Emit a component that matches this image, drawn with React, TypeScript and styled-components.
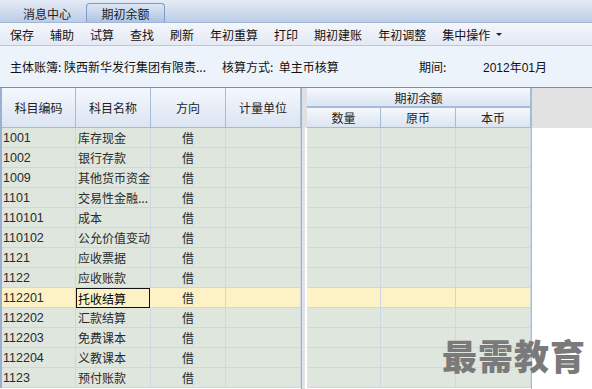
import styled, { createGlobalStyle } from "styled-components"

const GlobalStyle = createGlobalStyle`
  html, body { margin: 0; padding: 0; background: #fff; }
  body { font-family: "Liberation Sans", "Noto Sans CJK SC", sans-serif; font-size: 12px; color: #222; }
`

const rows = [
  { code: "1001", name: "库存现金" },
  { code: "1002", name: "银行存款" },
  { code: "1009", name: "其他货币资金" },
  { code: "1101", name: "交易性金融..." },
  { code: "110101", name: "成本" },
  { code: "110102", name: "公允价值变动" },
  { code: "1121", name: "应收票据" },
  { code: "1122", name: "应收账款" },
  { code: "112201", name: "托收结算", selected: true },
  { code: "112202", name: "汇款结算" },
  { code: "112203", name: "免费课本" },
  { code: "112204", name: "义教课本" },
  { code: "1123", name: "预付账款" },
]

const tools = ["保存", "辅助", "试算", "查找", "刷新", "年初重算", "打印", "期初建账", "年初调整"]

export default function App() {
  return (
    <Page>
      <GlobalStyle />
      <TabBar>
        <Tab>消息中心</Tab>
        <Tab $active>期初余额</Tab>
      </TabBar>
      <Toolbar>
        {tools.map(t => <ToolItem key={t}>{t}</ToolItem>)}
        <ToolItem>集中操作<Caret /></ToolItem>
      </Toolbar>
      <InfoBar>
        <InfoItem $w={212}>主体账簿: 陕西新华发行集团有限责...</InfoItem>
        <InfoItem $w={197}>核算方式:&nbsp;&nbsp;单主币核算</InfoItem>
        <InfoItem $w={64}>期间:</InfoItem>
        <InfoItem $num>2012年01月</InfoItem>
      </InfoBar>
      <GridArea>
        <Pane>
          <HeadRow>
            <HeadCell $w={74}>科目编码</HeadCell>
            <HeadCell $w={75}>科目名称</HeadCell>
            <HeadCell $w={75}>方向</HeadCell>
            <HeadCell $w={75}>计量单位</HeadCell>
          </HeadRow>
          {rows.map(r => (
            <Row key={r.code} $selected={r.selected} $edge>
              <Cell $w={74} $num>{r.code}</Cell>
              <Cell $w={75} $editing={r.selected}>{r.name}</Cell>
              <Cell $w={75} $center>借</Cell>
              <Cell $w={75} />
            </Row>
          ))}
        </Pane>
        <Splitter><SplitterHead /></Splitter>
        <Pane>
          <GroupHead>
            <GroupTitle>期初余额</GroupTitle>
            <SubHeadRow>
              <SubHeadCell $w={74}>数量</SubHeadCell>
              <SubHeadCell $w={75}>原币</SubHeadCell>
              <SubHeadCell $w={75}>本币</SubHeadCell>
            </SubHeadRow>
          </GroupHead>
          {rows.map(r => (
            <Row key={r.code} $selected={r.selected}>
              <Cell $w={74} />
              <Cell $w={75} />
              <Cell $w={75} />
            </Row>
          ))}
        </Pane>
        <Filler><FillerHead /></Filler>
      </GridArea>
      <Watermark>最需教育</Watermark>
    </Page>
  )
}

const Page = styled.div`
  position: relative;
  width: 592px;
  height: 389px;
  overflow: hidden;
  background: #fff;
`

const TabBar = styled.div`
  height: 22px;
  display: flex;
  align-items: flex-end;
  padding-left: 20px;
  gap: 12px;
  background: linear-gradient(#e4ebf6, #bccde6);
  box-sizing: border-box;
`

const Tab = styled.div<{ $active?: boolean }>`
  height: ${p => (p.$active ? "19px" : "18px")};
  width: ${p => (p.$active ? "79px" : "54px")};
  display: flex;
  align-items: center;
  justify-content: center;
  font-family: "Noto Sans CJK SC", sans-serif;
  font-size: 12px;
  color: #222;
  box-sizing: border-box;
  border: ${p => (p.$active ? "1px solid #7f9cc4" : "none")};
  border-bottom: none;
  border-radius: 4px 4px 0 0;
  background: ${p => (p.$active ? "linear-gradient(#dde7f5, #aec4e2)" : "transparent")};
`

const Toolbar = styled.div`
  height: 24px;
  display: flex;
  align-items: center;
  padding-left: 10px;
  gap: 16px;
  border-top: 1px solid #9fb6d6;
  border-bottom: 1px solid #b7c8e0;
  background: linear-gradient(#f4f6fb, #e4e9f4);
  box-sizing: border-box;
`

const ToolItem = styled.span`
  display: flex;
  align-items: center;
  font-family: "Noto Sans CJK SC", sans-serif;
  font-size: 12px;
  color: #111;
`

const Caret = styled.span`
  margin-left: 6px;
  width: 0;
  height: 0;
  border-left: 3px solid transparent;
  border-right: 3px solid transparent;
  border-top: 3px solid #222;
`

const InfoBar = styled.div`
  height: 42px;
  display: flex;
  align-items: center;
  padding-left: 10px;
  background: #edf3fb;
  border-bottom: 1px solid #8c8c8c;
  box-sizing: border-box;
`

const InfoItem = styled.span<{ $w?: number; $num?: boolean }>`
  width: ${p => (p.$w ? `${p.$w}px` : "auto")};
  flex-shrink: 0;
  white-space: nowrap;
  font-family: ${p => (p.$num ? `"Liberation Sans", "Noto Sans CJK SC", sans-serif` : `"Noto Sans CJK SC", sans-serif`)};
  font-size: 12px;
  color: #111;
`

const GridArea = styled.div`
  display: flex;
  height: 301px;
`

const Pane = styled.div`
  display: flex;
  flex-direction: column;
`

const headBg = "linear-gradient(#f5f8fd, #dbe4f1)"

const HeadRow = styled.div`
  display: flex;
  height: 40px;
  border-left: 2px solid #9bb1cf;
`

const HeadCell = styled.div<{ $w: number }>`
  width: ${p => p.$w}px;
  height: 40px;
  display: flex;
  align-items: center;
  justify-content: center;
  background: ${headBg};
  border-right: 1px solid #a5bcd9;
  border-bottom: 1px solid #a5bcd9;
  box-sizing: border-box;
  font-family: "Noto Sans CJK SC", sans-serif;
  font-size: 12px;
  color: #222;
`

const GroupHead = styled.div`
  height: 40px;
  display: flex;
  flex-direction: column;
`

const GroupTitle = styled.div`
  height: 18px;
  display: flex;
  align-items: center;
  justify-content: center;
  background: ${headBg};
  border-right: 1px solid #a5bcd9;
  border-bottom: 2px solid #a5bcd9;
  font-family: "Noto Sans CJK SC", sans-serif;
  font-size: 12px;
  color: #222;
`

const SubHeadRow = styled.div`
  display: flex;
  height: 20px;
`

const SubHeadCell = styled.div<{ $w: number }>`
  width: ${p => p.$w}px;
  height: 20px;
  box-sizing: border-box;
  display: flex;
  align-items: center;
  justify-content: center;
  background: ${headBg};
  border-right: 1px solid #a5bcd9;
  border-bottom: 1px solid #a5bcd9;
  font-family: "Noto Sans CJK SC", sans-serif;
  font-size: 12px;
  color: #222;
`

const Row = styled.div<{ $selected?: boolean; $edge?: boolean }>`
  display: flex;
  height: 20px;
  background: ${p => (p.$selected ? "#fdf2c6" : "#dee6dd")};
  border-left: ${p => (p.$edge ? "2px solid #9bb1cf" : "none")};
`

const Cell = styled.div<{ $w: number; $num?: boolean; $center?: boolean; $editing?: boolean }>`
  width: ${p => p.$w}px;
  height: 20px;
  box-sizing: border-box;
  display: flex;
  align-items: center;
  justify-content: ${p => (p.$center ? "center" : "flex-start")};
  padding-left: ${p => (p.$center ? "0" : p.$num ? "1px" : "2px")};
  border-right: 1px solid #ccd6e6;
  border-bottom: 1px solid #ccd6e6;
  font-family: ${p => (p.$num ? `"Liberation Sans", sans-serif` : `"Noto Sans CJK SC", sans-serif`)};
  font-size: ${p => (p.$num ? "12.5px" : "12px")};
  color: ${p => (p.$editing ? "#000" : "#2a2a2a")};
  white-space: nowrap;
  overflow: hidden;
  ${p => p.$editing && `
    border: 1px solid #111;
    margin-right: 1px;
    width: ${p.$w - 1}px;
    padding-left: 1px;
  `}
`

const Splitter = styled.div`
  width: 5px;
  background: linear-gradient(to right, #e2e2e2 60%, #fff 60%);
  border-left: 1px solid #9bb1cf;
`

const SplitterHead = styled.div`
  height: 40px;
  background: #e0e0e0;
`

const Filler = styled.div`
  flex: 1;
  border-left: 1px solid #a5bcd9;
`

const FillerHead = styled.div`
  height: 40px;
  background: #e2e2e2;
`

const Watermark = styled.div`
  position: absolute;
  right: 6px;
  top: 329px;
  font-family: "Noto Sans CJK SC", sans-serif;
  font-weight: 900;
  font-size: 35px;
  letter-spacing: 1px;
  color: #7a7a7a;
`
